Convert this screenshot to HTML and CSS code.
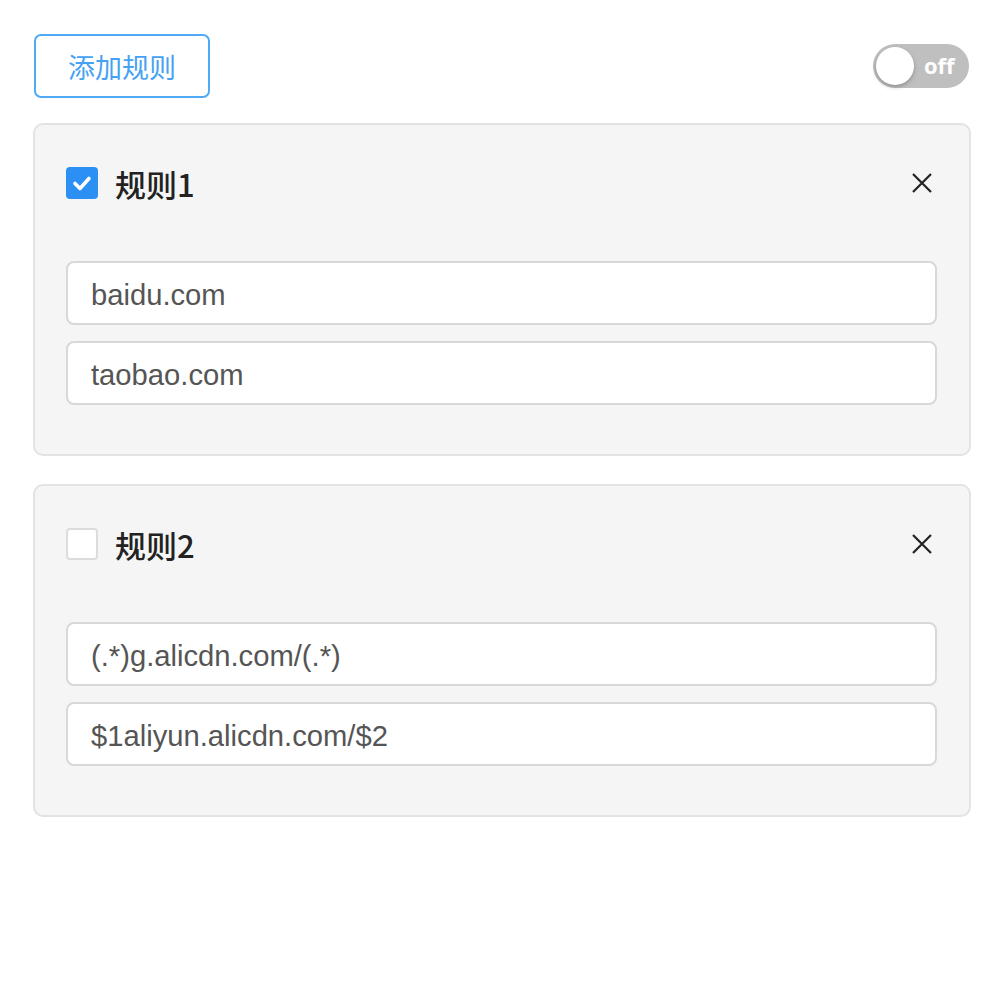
FILE: index.html
```html
<!DOCTYPE html>
<html lang="zh-CN">
<head>
<meta charset="utf-8">
<title>规则</title>
<link rel="stylesheet" href="styles.css">
</head>
<body>
<div class="page">
  <div class="topbar">
    <button class="add-btn">添加规则</button>
    <div class="switch">
      <span class="knob"></span>
      <span class="switch-label">off</span>
    </div>
  </div>

  <div class="card">
    <div class="card-head">
      <span class="check checked">
        <svg viewBox="0 0 32 32" width="32" height="32"><path d="M9 16.5l5 5 9-10" fill="none" stroke="#fff" stroke-width="3.6" stroke-linecap="round" stroke-linejoin="round"/></svg>
      </span>
      <span class="title">规则1</span>
      <span class="close">
        <svg viewBox="0 0 22 22" width="22" height="22"><path d="M2 2L20 20M20 2L2 20" stroke="#222" stroke-width="2.2" fill="none"/></svg>
      </span>
    </div>
    <div class="fields">
      <div class="field">baidu.com</div>
      <div class="field">taobao.com</div>
    </div>
  </div>

  <div class="card">
    <div class="card-head">
      <span class="check"></span>
      <span class="title">规则2</span>
      <span class="close">
        <svg viewBox="0 0 22 22" width="22" height="22"><path d="M2 2L20 20M20 2L2 20" stroke="#222" stroke-width="2.2" fill="none"/></svg>
      </span>
    </div>
    <div class="fields">
      <div class="field">(.*)g.alicdn.com/(.*)</div>
      <div class="field">$1aliyun.alicdn.com/$2</div>
    </div>
  </div>
</div>
</body>
</html>
```

FILE: styles.css
```css
* { box-sizing: border-box; }
html, body { margin: 0; padding: 0; background: #fff; }
body {
  font-family: "Liberation Sans", "Noto Sans CJK SC", sans-serif;
  color: #222;
}
.page {
  padding: 34px 33px 0 33px;
  width: 1004px;
}
.topbar {
  display: flex;
  align-items: center;
  justify-content: space-between;
  padding-left: 1px;
  padding-right: 2px;
}
.add-btn {
  width: 176px;
  height: 64px;
  border: 2px solid #4fa9f5;
  border-radius: 7px;
  background: #fff;
  color: #45a2f3;
  font-family: "Noto Sans CJK SC", sans-serif;
  font-size: 27px;
  padding: 0;
  line-height: 1;
}
.switch {
  width: 96px;
  height: 44px;
  border-radius: 22px;
  background: #bfbfbf;
  display: flex;
  align-items: center;
  padding: 0 3px;
}
.knob {
  width: 38px;
  height: 38px;
  border-radius: 50%;
  background: #fff;
  box-shadow: 0 2px 4px rgba(0,0,0,0.25);
}
.switch-label {
  color: #fff;
  font-family: "Open Sans", "Liberation Sans", sans-serif;
  font-weight: 700;
  font-size: 22px;
  margin-left: 10px;
  line-height: 1;
  padding-bottom: 2px;
}
.card {
  margin-top: 25px;
  border: 2px solid #e3e3e3;
  border-radius: 10px;
  background: #f5f5f5;
  padding: 42px 32px 49px 31px;
}
.card + .card { margin-top: 28px; }
.card-head {
  display: flex;
  align-items: center;
  height: 32px;
}
.check {
  width: 32px;
  height: 32px;
  border-radius: 4px;
  border: 2px solid #dcdcdc;
  background: #fff;
  display: flex;
  align-items: center;
  justify-content: center;
}
.check.checked {
  border: none;
  background: #2b8ff4;
}
.title {
  margin-left: 17px;
  font-family: "Noto Sans CJK SC", sans-serif;
  font-weight: 500;
  font-size: 31px;
  color: #222;
  line-height: 1;
}
.close {
  margin-left: auto;
  margin-right: 4px;
  width: 22px;
  height: 22px;
  display: flex;
}
.fields {
  margin-top: 62px;
  display: flex;
  flex-direction: column;
  gap: 16px;
}
.field {
  height: 64px;
  background: #fff;
  border: 2px solid #d8d8d8;
  border-radius: 8px;
  padding: 4px 23px 0 23px;
  display: flex;
  align-items: center;
  font-size: 29.2px;
  color: #555;
}
```
